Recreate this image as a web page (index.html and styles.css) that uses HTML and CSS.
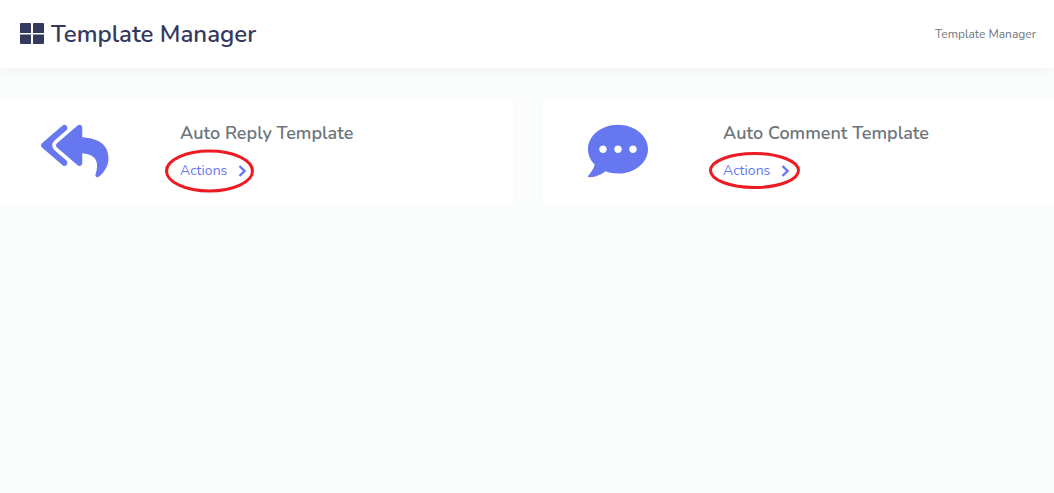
FILE: index.html
```html
<!DOCTYPE html>
<html lang="en">
<head>
  <meta charset="utf-8">
  <meta name="viewport" content="width=device-width, initial-scale=1">
  <title>Template Manager</title>
  <link rel="stylesheet" href="styles.css">
</head>
<body>
  <header class="section-header">
    <h1 class="section-title">
      <svg class="title-icon" viewBox="0 0 24 23" aria-hidden="true"><path d="M1 0h9a1 1 0 0 1 1 1v9H0V1a1 1 0 0 1 1-1zM14 0h9a1 1 0 0 1 1 1v9H13V1a1 1 0 0 1 1-1zM0 11.500h11V21H1a1 1 0 0 1-1-1zM13 11.500h11V20a1 1 0 0 1-1 1H13z"/></svg>
      Template Manager
    </h1>
    <nav class="breadcrumb" aria-label="Breadcrumb">Template Manager</nav>
  </header>
  <main class="card-grid">
    <article class="card">
      <div class="card-icon">
        <svg class="icon-large" viewBox="0 0 576 512" aria-hidden="true"><path d="M136.309 189.836L312.313 37.851C327.720 24.546 352 35.348 352 56.015v82.763c129.182 10.231 224 52.212 224 183.548 0 61.441-39.582 122.309-83.333 154.132-13.653 9.931-33.111-2.533-28.077-18.631 38.512-123.162-3.922-169.482-112.590-182.015v84.175c0 20.701-24.300 31.453-39.687 18.164L136.309 226.164c-11.071-9.561-11.086-26.753 0-36.328zm-128 36.328L184.313 378.150C199.700 391.439 224 380.687 224 359.986v-15.818l-108.606-93.785A55.960 55.960 0 0 1 96 207.998a55.953 55.953 0 0 1 19.393-42.380L224 71.832V56.015c0-20.667-24.280-31.469-39.687-18.164L8.309 189.836c-11.086 9.575-11.071 26.767 0 36.328z"/></svg>
      </div>
      <div class="card-body">
        <h2 class="card-title">Auto Reply Template</h2>
        <a class="card-link" href="#reply">Actions
          <svg class="chevron" viewBox="0 0 8 12" aria-hidden="true"><path d="M1.500 1L6.500 6l-5 5"/></svg>
          <svg class="mark mark-reply" aria-hidden="true"><ellipse cx="50%" cy="50%" rx="43" ry="20"/></svg>
        </a>
      </div>
    </article>
    <article class="card">
      <div class="card-icon">
        <svg class="icon-large" viewBox="0 0 512 512" aria-hidden="true"><path d="M256 32C114.600 32 0 125.100 0 240c0 49.600 21.400 95 57 130.700C44.500 421.100 2.700 466 2.200 466.500c-2.200 2.300-2.800 5.700-1.500 8.700S4.800 480 8 480c66.300 0 116-31.800 140.600-51.400 32.700 12.300 69 19.400 107.400 19.400 141.400 0 256-93.100 256-208S397.400 32 256 32zM128 272c-17.700 0-32-14.300-32-32s14.300-32 32-32 32 14.300 32 32-14.300 32-32 32zm128 0c-17.700 0-32-14.300-32-32s14.300-32 32-32 32 14.300 32 32-14.300 32-32 32zm128 0c-17.700 0-32-14.300-32-32s14.300-32 32-32 32 14.300 32 32-14.300 32-32 32z"/></svg>
      </div>
      <div class="card-body">
        <h2 class="card-title">Auto Comment Template</h2>
        <a class="card-link" href="#comment">Actions
          <svg class="chevron" viewBox="0 0 8 12" aria-hidden="true"><path d="M1.500 1L6.500 6l-5 5"/></svg>
          <svg class="mark mark-comment" aria-hidden="true"><ellipse cx="50%" cy="50%" rx="44" ry="17"/></svg>
        </a>
      </div>
    </article>
  </main>
</body>
</html>
```
FILE: styles.css
```css
* {
  box-sizing: border-box;
}

body {
  margin: 0;
  overflow-x: hidden;
  background: #fafdfb;
  color: #6c757d;
  font-family: Nunito, "Open Sans", sans-serif;
  font-size: 14px;
}

h1,
h2 {
  margin: 0;
}

.section-header,
.card {
  background: #fff;
  border-radius: 3px;
  box-shadow: 0 4px 8px rgba(0, 0, 0, 0.03);
}

.section-header {
  display: flex;
  align-items: center;
  justify-content: space-between;
  padding: 18px 18px 18px 20px;
  margin-bottom: 30px;
}

.section-title {
  display: flex;
  align-items: center;
  gap: 7px;
  color: #34395e;
  font-size: 24px;
  font-weight: 600;
  line-height: 32px;
}

.title-icon {
  width: 24px;
  height: 23px;
  fill: currentColor;
}

.breadcrumb {
  font-size: 12px;
  line-height: 18px;
}

.card-grid {
  display: grid;
  grid-template-columns: 1fr 1fr;
  gap: 30px;
  margin-right: -2px;
}

.card {
  display: flex;
}

.card-icon {
  display: flex;
  justify-content: center;
  flex: 0 0 150px;
  padding: 23px 0 25px;
}

.icon-large {
  height: 60px;
  fill: #6777ef;
}

.card-body {
  flex: 1;
  padding: 21px 30px 20px;
}

.card-title {
  margin-bottom: 12px;
  font-size: 18px;
  font-weight: 600;
  line-height: 28px;
}

.card-link {
  position: relative;
  display: inline-flex;
  align-items: center;
  gap: 11px;
  color: #6777ef;
  line-height: 24px;
  text-decoration: none;
  vertical-align: top;
}

.chevron {
  width: 8px;
  height: 12px;
  fill: none;
  stroke: currentColor;
  stroke-width: 2.4;
}

.mark {
  position: absolute;
  fill: none;
  stroke: #ed1c24;
  stroke-width: 3;
  pointer-events: none;
}

.mark-reply {
  top: -10px;
  left: -15px;
  width: 89px;
  height: 44px;
}

.mark-comment {
  top: -7px;
  left: -14px;
  width: 91px;
  height: 37px;
}
```
